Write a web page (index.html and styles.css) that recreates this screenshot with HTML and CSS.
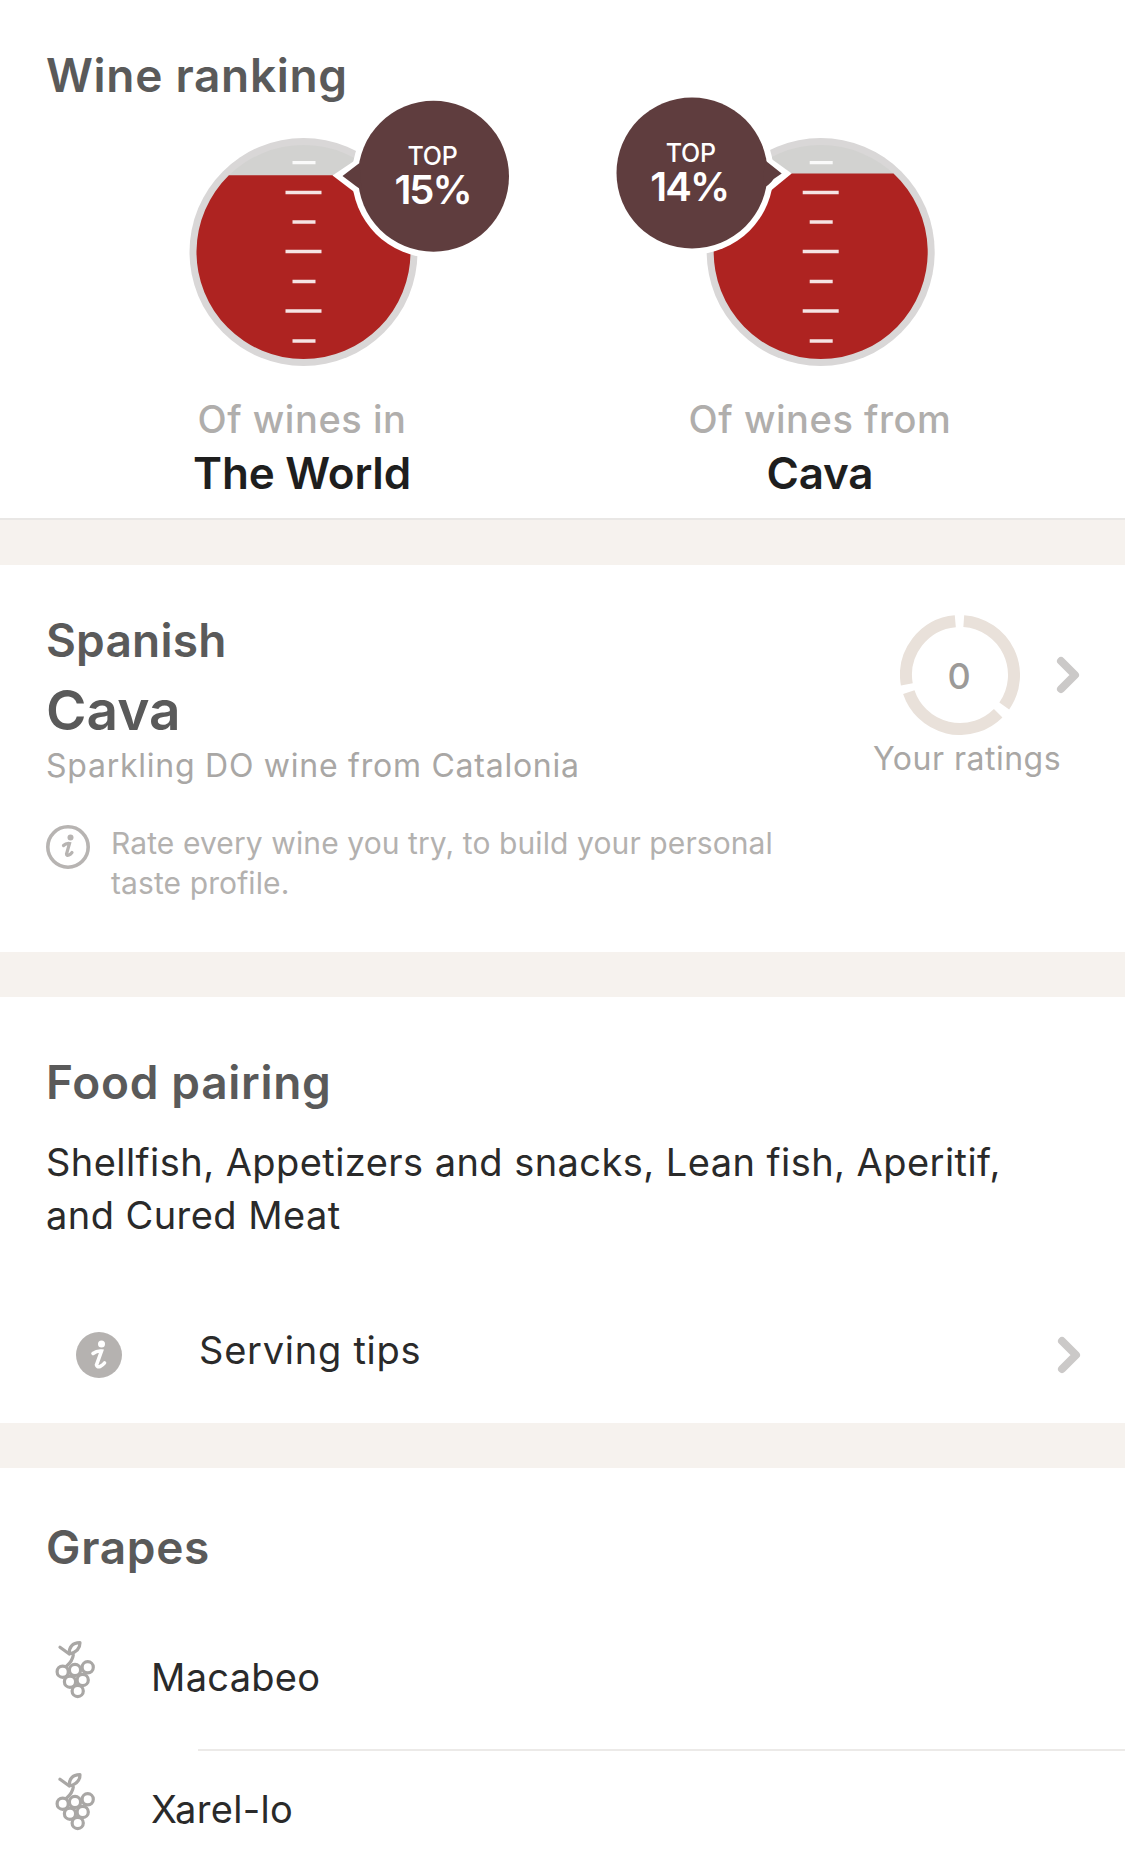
FILE: index.html
```html
<!DOCTYPE html>
<html lang="en">
<head>
<meta charset="utf-8">
<title>Wine details</title>
<link rel="stylesheet" href="styles.css">
</head>
<body>
<svg class="defs" width="0" height="0" aria-hidden="true">
  <symbol id="grape" viewBox="0 0 42 58">
    <g fill="none" stroke="currentColor" stroke-width="3.200" stroke-linecap="round" stroke-linejoin="round">
      <path d="M5 6.300 14.300 13M14.300 13Q13.500 2.200 25 1.700Q25 10.500 14.300 13ZM18.300 14Q17.500 20 11.700 25"/>
      <circle cx="7.700" cy="30.700" r="5.600"/><circle cx="20" cy="29" r="5.600"/><circle cx="32.700" cy="26.300" r="5.600"/>
      <circle cx="15" cy="40.700" r="5.600"/><circle cx="27.700" cy="39" r="5.600"/><circle cx="22.700" cy="50" r="5.600"/>
    </g>
  </symbol>
  <symbol id="chev" viewBox="0 0 28 38">
    <path d="M5 5 19 19 5 33" fill="none" stroke="currentColor" stroke-width="8" stroke-linecap="round" stroke-linejoin="round"/>
  </symbol>
  <symbol id="marks" viewBox="0 0 40 204">
    <g stroke="#fff" stroke-opacity=".88" stroke-width="3.500">
      <path d="M10 1.500H33M3 31.500H39M10 61H33M3 90.500H39M10 120.500H33M3 150H39M10 180H33"/>
    </g>
  </symbol>
</svg>
<main class="page">
  <section class="card ranking">
    <h2 class="title">Wine ranking</h2>
    <div class="gauges">
      <div class="gauge">
        <svg class="gauge-art" viewBox="-1.500 0 268 236" width="268" height="236">
          <circle cx="134" cy="134" r="114" fill="#d9d7d7"/>
          <circle cx="134" cy="134" r="107" fill="#d2d2d0"/>
          <path d="M59.400 57.300H208.600A107 107 0 1 1 59.400 57.300Z" fill="#ae2321"/>
          <use href="#marks" x="113" y="43" width="40" height="204"/>
          <circle cx="264" cy="58.300" r="81.500" fill="#fff"/>
          <path d="M163 57.500 192 38 190 78Z" fill="#fff"/>
          <circle cx="264" cy="58.300" r="75.500" fill="#5f3d3e"/>
          <path d="M173 58 190 45 192 72Q186 68 181 64Z" fill="#5f3d3e"/>
          <text class="g-top" x="263" y="46.500" text-anchor="middle">TOP</text>
          <text class="g-pct" x="263" y="85.500" text-anchor="middle">15%</text>
        </svg>
        <p class="g-label">Of wines in</p>
        <p class="g-name">The World</p>
      </div>
      <div class="gauge">
        <svg class="gauge-art" viewBox="91.300 0 268 236" width="268" height="236">
          <circle cx="226" cy="134" r="114" fill="#d9d7d7"/>
          <circle cx="226" cy="134" r="107" fill="#d2d2d0"/>
          <path d="M153.200 55.600H298.800A107 107 0 1 1 153.200 55.600Z" fill="#ae2321"/>
          <use href="#marks" x="205" y="43" width="40" height="204"/>
          <circle cx="97.300" cy="55" r="81.500" fill="#fff"/>
          <path d="M197 55.500 170 36 172 76Z" fill="#fff"/>
          <circle cx="97.300" cy="55" r="75.500" fill="#5f3d3e"/>
          <path d="M187 55.500 170 42 168 70Q174 68 179 61Z" fill="#5f3d3e"/>
          <text class="g-top" x="96" y="43.500" text-anchor="middle">TOP</text>
          <text class="g-pct" x="94.500" y="82.500" text-anchor="middle">14%</text>
        </svg>
        <p class="g-label">Of wines from</p>
        <p class="g-name">Cava</p>
      </div>
    </div>
  </section>

  <section class="card style">
    <div class="style-row">
      <div class="style-text">
        <p class="style-country">Spanish</p>
        <h2 class="style-name">Cava</h2>
        <p class="style-desc">Sparkling DO wine from Catalonia</p>
      </div>
      <div class="ratings">
        <div class="ratings-top">
          <div class="ring">
            <svg viewBox="0 0 120 120" width="120" height="120">
              <g fill="none" stroke="#e9e1da" stroke-width="12">
                <path d="M63.770 6.130A54 54 0 0 1 104.240 90.970"/>
                <path d="M98.180 98.180A54 54 0 0 1 8.800 77.100"/>
                <path d="M6.820 69.380A54 54 0 0 1 55.290 6.200"/>
              </g>
            </svg>
            <span class="ring-num">0</span>
          </div>
          <svg class="chev" width="28" height="38"><use href="#chev"/></svg>
        </div>
        <p class="ratings-label">Your ratings</p>
      </div>
    </div>
    <div class="tip">
      <svg class="tip-icon" viewBox="0 0 44 44" width="44" height="44">
        <circle cx="22" cy="22" r="20.200" fill="none" stroke="#b7b4b2" stroke-width="3.600"/>
        <circle cx="24.500" cy="12.500" r="3" fill="#b7b4b2"/>
        <path d="M17.500 20.500Q20 18 23.500 18.500L20.500 29Q20.500 31 23 30Q24.500 29.500 26 27.500" fill="none" stroke="#b7b4b2" stroke-width="3.200" stroke-linecap="round"/>
      </svg>
      <p class="tip-text">Rate every wine you try, to build your personal taste profile.</p>
    </div>
  </section>

  <section class="card food">
    <h2 class="title">Food pairing</h2>
    <p class="food-list">Shellfish, Appetizers and snacks, Lean fish, Aperitif, and Cured Meat</p>
    <div class="tips-row">
      <svg class="tips-icon" viewBox="0 0 46 46" width="46" height="46">
        <circle cx="23" cy="23" r="23" fill="#b5b2b0"/>
        <circle cx="25.500" cy="12" r="3.500" fill="#fff"/>
        <path d="M17 21.500Q21 18.500 25.500 19L20.500 33Q21 35.500 24 34.500Q26.500 33.500 28.500 31" fill="none" stroke="#fff" stroke-width="3.600" stroke-linecap="round"/>
      </svg>
      <span class="tips-label">Serving tips</span>
      <svg class="chev" width="28" height="38"><use href="#chev"/></svg>
    </div>
  </section>

  <section class="card grapes">
    <h2 class="title">Grapes</h2>
    <ul class="grape-list">
      <li class="grape-row"><svg class="grape-icon" width="42" height="58"><use href="#grape"/></svg><span>Macabeo</span></li>
      <li class="grape-row"><svg class="grape-icon" width="42" height="58"><use href="#grape"/></svg><span>Xarel-lo</span></li>
    </ul>
  </section>
</main>
</body>
</html>
```

FILE: styles.css
```css
* { box-sizing: border-box; }
html, body { margin: 0; padding: 0; }
body {
  width: 1125px;
  height: 1870px;
  overflow: hidden;
  background: #f6f2ee;
  font-family: Inter, "Liberation Sans", sans-serif;
  color: #1e1e1e;
}
.defs { position: absolute; }
p, h2, ul { margin: 0; padding: 0; }
.page { display: flex; flex-direction: column; gap: 45px; }
.card { background: #fff; padding-left: 46px; }
.title { font-size: 46px; line-height: 54px; font-weight: 600; color: #5a5a5a; letter-spacing: 0.7px; }

.ranking { height: 520px; padding: 48px 0 0 46px; border-bottom: 2px solid #e9e7e5; }
.gauges { display: flex; margin-left: -3px; margin-top: 16px; }
.gauge { width: 518px; display: flex; flex-direction: column; align-items: center; }
.gauge-art { display: block; overflow: visible; flex: none; }
.g-top { font: 500 25px Inter, sans-serif; fill: #fff; letter-spacing: -0.3px; }
.g-pct { font: 600 40px Inter, sans-serif; fill: #fff; letter-spacing: -2px; }
.g-label { margin-top: 40px; font-size: 38px; line-height: 50px; font-weight: 500; color: #b0aeac; letter-spacing: 0.55px; }
.g-name { margin-top: 3px; font-size: 44px; line-height: 52px; font-weight: 600; color: #1e1e1e; letter-spacing: -0.2px; }

.style { height: 387px; padding-top: 48px; }
.style-row { display: flex; justify-content: space-between; }
.style-country { font-size: 46px; line-height: 54px; font-weight: 600; color: #5a5a5a; letter-spacing: 0.2px; }
.style-name { font-size: 55px; line-height: 66px; font-weight: 600; color: #5a5a5a; margin-top: 10px; }
.style-desc { font-size: 32px; line-height: 44px; color: #a9a7a5; margin-top: 1px; letter-spacing: 0.75px; }
.ratings { display: flex; flex-direction: column; align-items: flex-start; margin-right: 41px; }
.ratings-top { display: flex; align-items: center; gap: 36px; margin-left: 27px; margin-top: 2px; }
.ring { position: relative; width: 120px; height: 120px; }
.ring svg { display: block; }
.ring-num { position: absolute; inset: 2px 2px 0 0; display: flex; align-items: center; justify-content: center; font-size: 36px; font-weight: 500; color: #9c9a98; }
.ratings-label { font-size: 32px; line-height: 42px; color: #a9a7a5; margin-top: 3px; letter-spacing: 0.5px; }
.chev { color: #cbc9c8; display: block; flex: none; }
.tip { display: flex; gap: 21px; margin-top: 37px; }
.tip-icon { flex: none; }
.tip-text { width: 690px; font-size: 30px; line-height: 40px; color: #b3b1af; margin-top: -2px; letter-spacing: 0.1px; }

.food { height: 426px; padding-top: 58px; }
.food-list { width: 1030px; margin-top: 27px; font-size: 38px; line-height: 53px; color: #2a2a2a; letter-spacing: 0.44px; }
.tips-row { display: flex; align-items: center; margin-top: 90px; padding-right: 40px; }
.tips-icon { flex: none; margin-left: 30px; }
.tips-label { flex: 1; margin-left: 77px; font-size: 38px; line-height: 50px; color: #2a2a2a; margin-top: -11px; letter-spacing: 0.75px; }

.grapes { height: 403px; padding-top: 52px; }
.grape-list { list-style: none; margin-top: 33px; }
.grape-row { display: flex; align-items: center; height: 132px; gap: 54px; font-size: 38px; color: #2a2a2a; position: relative; margin-left: 9px; letter-spacing: 0.3px; }
.grape-row span { margin-top: 8px; }
.grape-row + .grape-row::before { content: ""; position: absolute; left: 143px; right: 0; top: 10px; height: 2px; background: #eceae8; }
.grape-icon { color: #a9a7a5; display: block; flex: none; margin-top: -6px; }
```
